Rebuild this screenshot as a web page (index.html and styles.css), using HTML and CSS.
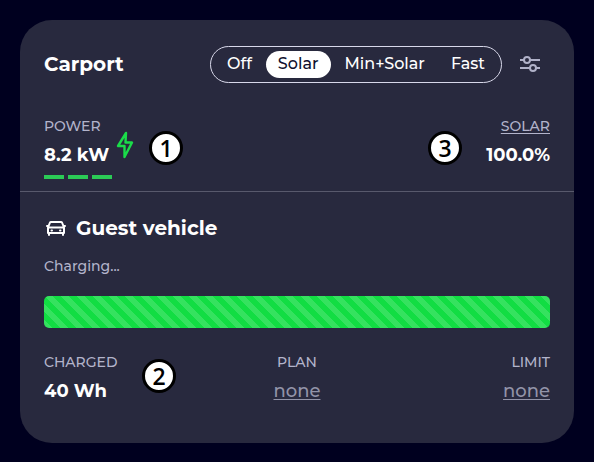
FILE: index.html
```html
<!DOCTYPE html>
<html lang="en">
<head>
<meta charset="utf-8">
<meta name="viewport" content="width=device-width, initial-scale=1">
<title>Carport</title>
<link rel="stylesheet" href="styles.css">
</head>
<body>
<main class="card">
  <header class="header">
    <h1 class="title">Carport</h1>
    <div class="modes" role="group" aria-label="Charging mode">
      <button type="button" class="mode" aria-pressed="false">Off</button>
      <button type="button" class="mode mode-active" aria-pressed="true">Solar</button>
      <button type="button" class="mode" aria-pressed="false">Min+Solar</button>
      <button type="button" class="mode" aria-pressed="false">Fast</button>
    </div>
    <button type="button" class="settings" aria-label="Settings">
      <svg width="20" height="16" viewBox="0 0 20 16" fill="none" stroke="currentColor" stroke-width="2">
        <path d="M0 4h4M10 4h10M0 12h10M16 12h4"/>
        <circle cx="7" cy="4" r="3"/>
        <circle cx="13" cy="12" r="3"/>
      </svg>
    </button>
  </header>

  <section class="stats live">
    <div class="stat">
      <div class="label">POWER</div>
      <div class="value power">8.2 kW
        <svg class="bolt" width="18" height="28" viewBox="0 0 18 28" fill="none" stroke="currentColor" stroke-width="2.400" stroke-linejoin="round">
          <path d="M10 2 2 15H8.500L8.500 26 16 11.500H9.500Z"/>
        </svg>
      </div>
      <div class="phases"><span></span><span></span><span></span></div>
    </div>
    <div class="stat end">
      <button type="button" class="label link">SOLAR</button>
      <div class="value">100.0%</div>
    </div>
    <span class="marker marker-one">1</span>
    <span class="marker marker-three">3</span>
  </section>

  <section class="vehicle">
    <h2 class="name">
      <svg width="24" height="24" viewBox="0 0 24 24" fill="none" stroke="currentColor" stroke-width="2" stroke-linecap="round" stroke-linejoin="round">
        <path d="M4 11.500 6 6.500Q6.300 6 7 6H17Q17.700 6 18 6.500L20 11.500M4 11.500H20V17H4ZM3 10H4.500M19.500 10H21M5 17V19M19 17V19"/>
        <path d="M7.500 14.500H8M16 14.500H16.500"/>
      </svg>
      Guest vehicle
    </h2>
    <p class="status">Charging...</p>
    <div class="bar" role="progressbar" aria-label="Charging" aria-valuenow="100" aria-valuemin="0" aria-valuemax="100"></div>
    <div class="stats session">
      <div class="stat">
        <div class="label">CHARGED</div>
        <div class="value">40 Wh</div>
      </div>
      <div class="stat center">
        <div class="label">PLAN</div>
        <button type="button" class="value link none">none</button>
      </div>
      <div class="stat end">
        <div class="label">LIMIT</div>
        <button type="button" class="value link none">none</button>
      </div>
      <span class="marker marker-two">2</span>
    </div>
  </section>
</main>
</body>
</html>
```
FILE: styles.css
```css
* { box-sizing: border-box; }

body {
  margin: 0;
  padding: 20px;
  background: #00001f;
  color: #fff;
  font-family: Montserrat, Inter, sans-serif;
}

button {
  margin: 0;
  padding: 0;
  border: 0;
  background: none;
  color: inherit;
  font: inherit;
  cursor: pointer;
}

svg { display: block; flex: none; }

.card {
  border-radius: 32px;
  background: #28293e;
}

.header {
  display: flex;
  align-items: center;
  padding: 26px 34px 33px 24px;
}

.title {
  margin: 0 auto 0 0;
  padding-bottom: 2px;
  font-size: 20px;
  line-height: 28px;
  font-weight: 700;
}

.modes {
  display: flex;
  gap: 2px;
  padding: 4px;
  border: 1px solid #d8d8ea;
  border-radius: 20px;
}

.mode {
  padding: 0 12px 2px;
  border-radius: 14px;
  font-size: 16px;
  line-height: 25px;
  font-weight: 500;
}

.mode-active {
  background: #fff;
  color: #10112e;
}

.settings {
  margin-left: 18px;
  padding-bottom: 2px;
  color: #b0b1c8;
}

.stats {
  position: relative;
  display: grid;
}

.live {
  grid-template-columns: 1fr 1fr;
  padding: 0 24px 12px;
  border-bottom: 1px solid #58596c;
}

.session { grid-template-columns: 1fr 1fr 1fr; }

.stat {
  display: flex;
  flex-direction: column;
  align-items: flex-start;
}

.center { align-items: center; }
.end { align-items: flex-end; }

.label {
  margin-bottom: 8px;
  color: #b3b4cb;
  font-size: 14px;
  line-height: 20px;
  font-weight: 500;
}

.value {
  font-size: 18px;
  line-height: 22px;
  font-weight: 700;
}

.link {
  text-decoration: underline;
  text-underline-offset: 2px;
  text-decoration-thickness: 1px;
}

.none {
  color: #9293a8;
  font-weight: 500;
}

.power {
  display: flex;
  align-items: flex-end;
  gap: 7px;
}

.bolt {
  margin: -16px 0 7px;
  color: #1adc49;
}

.phases {
  display: flex;
  gap: 4px;
  margin-top: 9px;
}

.phases span {
  width: 20px;
  height: 4px;
  background: #2bcb56;
}

.vehicle { padding: 22px 24px 41px; }

.name {
  display: flex;
  align-items: center;
  gap: 8px;
  margin: 0;
  font-size: 20px;
  line-height: 28px;
  font-weight: 700;
}

.status {
  margin: 14px 0 20px;
  color: #b3b4cb;
  font-size: 14px;
  line-height: 20px;
  font-weight: 500;
}

.bar {
  height: 32px;
  margin-bottom: 24px;
  border-radius: 5px;
  background: #12dd43 linear-gradient(45deg, rgba(255, 255, 255, .15) 25%, transparent 25%, transparent 50%, rgba(255, 255, 255, .15) 50%, rgba(255, 255, 255, .15) 75%, transparent 75%) 0 0 / 16px 16px;
}

.marker {
  position: absolute;
  width: 34px;
  height: 34px;
  border: 3px solid #000;
  border-radius: 50%;
  background: #fff;
  color: #000;
  font: 600 23px/28px "Open Sans", sans-serif;
  text-align: center;
}

.marker-one { left: 129px; top: 15px; }
.marker-two { left: 98px; top: 7px; }
.marker-three { right: 112px; top: 15px; }
```
